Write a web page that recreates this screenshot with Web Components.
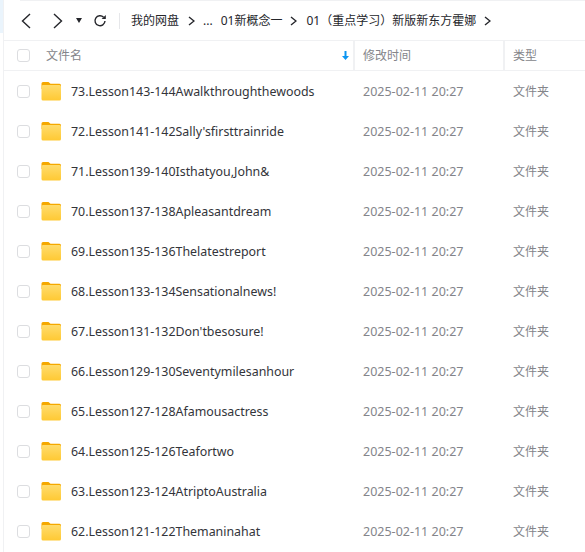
<!DOCTYPE html>
<html><head><meta charset="utf-8"><style>
html,body{margin:0;padding:0;background:#fff;overflow:hidden}
body{width:585px;height:552px;font-family:"Liberation Sans","Noto Sans CJK SC",sans-serif}
</style></head><body>
<file-app>
<nav-bar></nav-bar>
<list-head></list-head>
<file-row name="73.Lesson143-144Awalkthroughthewoods"></file-row>
<file-row name="72.Lesson141-142Sally'sfirsttrainride"></file-row>
<file-row name="71.Lesson139-140Isthatyou,John&amp;"></file-row>
<file-row name="70.Lesson137-138Apleasantdream"></file-row>
<file-row name="69.Lesson135-136Thelatestreport"></file-row>
<file-row name="68.Lesson133-134Sensationalnews!"></file-row>
<file-row name="67.Lesson131-132Don'tbesosure!"></file-row>
<file-row name="66.Lesson129-130Seventymilesanhour"></file-row>
<file-row name="65.Lesson127-128Afamousactress"></file-row>
<file-row name="64.Lesson125-126Teafortwo"></file-row>
<file-row name="63.Lesson123-124AtriptoAustralia"></file-row>
<file-row name="62.Lesson121-122Themaninahat"></file-row>
</file-app>
<script>
const FONT='"Noto Sans","Noto Sans CJK SC",sans-serif';
const CH='<svg width="7" height="10" viewBox="0 0 7 10" fill="none" stroke="#25262b" stroke-width="1.4"';
class FileApp extends HTMLElement{constructor(){super();this.attachShadow({mode:'open'}).innerHTML=`<style>
:host{display:flex;flex-direction:column;height:552px;overflow:hidden;box-sizing:border-box;padding-left:4px;font-family:${FONT};
background:linear-gradient(#eaf4fc,#eaf4fc) 0 0/3px 33px no-repeat,linear-gradient(#f0f1f3,#f0f1f3) 3px 0/1px 100% no-repeat,linear-gradient(#f0f1f3,#f0f1f3) 20px 0/100% 1px no-repeat}
</style><slot></slot>`}}
class NavBar extends HTMLElement{constructor(){super();this.attachShadow({mode:'open'}).innerHTML=`<style>
:host{display:flex;align-items:center;height:41px;box-sizing:border-box;border-bottom:1px solid #f0f1f3;padding-top:1px;color:#25262b;font-size:12px;white-space:nowrap}
svg{display:block;flex:none}
.nav{display:flex;align-items:center;padding-left:16px;width:115px;flex:none;box-sizing:border-box}
.sep{width:1px;height:16px;background:#e6e7ea;flex:none}
.crumbs{display:flex;align-items:center;padding-left:11px}
.crumbs span{display:block;line-height:16px}
</style>
<div class="nav">
<svg width="12" height="16" viewBox="0 0 12 16" fill="none" stroke="#25262b" stroke-width="1.4"><path d="M10 1 2.500 8l7.500 7"/></svg>
<svg style="margin-left:20px" width="12" height="16" viewBox="0 0 12 16" fill="none" stroke="#25262b" stroke-width="1.4"><path d="M2 1l7.500 7L2 15"/></svg>
<svg style="margin-left:12px" width="6" height="5" viewBox="0 0 6 5"><path d="M0 0h6L3 5z" fill="#25262b"/></svg>
<svg style="margin-left:11px" width="14" height="14" viewBox="0 0 14 14" fill="none"><path d="M10.600 3.200A5 5 0 1 0 12 7" stroke="#25262b" stroke-width="1.400"/><path d="M8.600 5h4.200V.9z" fill="#25262b"/></svg>
</div>
<div class="sep"></div>
<div class="crumbs">
<span>我的网盘</span>${CH} style="margin:0 8px 0 9px"><path d="M1 1l5 4-5 4"/></svg>
<span>...</span><span style="margin-left:8px">01新概念一</span>${CH} style="margin:0 9px 0 8px"><path d="M1 1l5 4-5 4"/></svg>
<span>01（重点学习）新版新东方霍娜</span>${CH} style="margin-left:8px"><path d="M1 1l5 4-5 4"/></svg>
</div>`}}
class ListHead extends HTMLElement{constructor(){super();this.attachShadow({mode:'open'}).innerHTML=`<style>
:host{display:grid;grid-template-columns:351px 150px 1fr;height:30px;box-sizing:border-box;border-bottom:1px solid #f0f1f3;color:#84858a;font-size:12px;align-items:center}
.c{display:flex;align-items:center;height:100%;box-sizing:border-box;padding-bottom:1px}
.n{padding-left:13px;border-right:2px solid #f0f1f3}
.n span{margin-left:16px;flex:1}
.n svg{margin-right:4px}
.m{padding-left:8px;border-right:2px solid #f0f1f3}
.t{padding-left:8px}
.cb{width:11px;height:11px;border:1px solid #dcdde0;border-radius:3px;flex:none;background:#fff}
</style>
<div class="c n"><i class="cb"></i><span>文件名</span><svg width="7" height="9" viewBox="0 0 7 9"><path d="M2.500 0h2v5H7L3.500 9 0 5h2.500z" fill="#0b95f2"/></svg></div>
<div class="c m">修改时间</div><div class="c t">类型</div>`}}
class FileRow extends HTMLElement{constructor(){super();this.attachShadow({mode:'open'}).innerHTML=`<style>
:host{display:grid;grid-template-columns:351px 150px 1fr;height:40px;flex:none;align-items:center;font-size:12px;color:#84858a;white-space:nowrap}
.n{display:flex;align-items:center;padding-left:13px;color:#33343a;font-size:12.4px}
.cb{width:11px;height:11px;border:1px solid #dcdde0;border-radius:3px;flex:none;background:#fff}
svg{display:block;flex:none;margin:0 9px 0 11px}
.m{padding-left:8px;font-size:12.5px}
.t{padding-left:8px}
</style>
<div class="n"><i class="cb"></i><svg width="21" height="20" viewBox="0 0 21 20"><path d="M.5 2.500A1.500 1.500 0 0 1 2 1h5.500l2 1.700h9A1.500 1.500 0 0 1 20 4.200V8H.5z" fill="#f5a800"/><rect x=".5" y="4" width="19.500" height="15.500" rx="1.500" fill="url(#g)"/><defs><linearGradient id="g" x1="0" y1="0" x2="0" y2="1"><stop offset="0" stop-color="#ffdc6d"/><stop offset="1" stop-color="#ffc933"/></linearGradient></defs></svg><span id="name"></span></div>
<div class="m">2025-02-11 20:27</div><div class="t">文件夹</div>`}
connectedCallback(){this.shadowRoot.getElementById('name').textContent=this.getAttribute('name')}}
customElements.define('file-app',FileApp);customElements.define('nav-bar',NavBar);customElements.define('list-head',ListHead);customElements.define('file-row',FileRow);
</script></body></html>
